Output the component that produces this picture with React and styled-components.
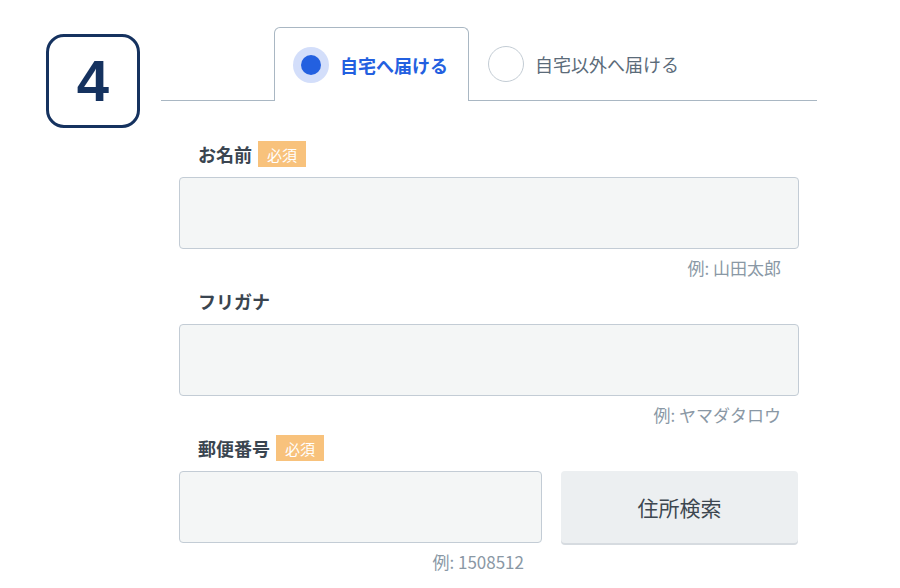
import React, { useState } from "react";
import styled, { createGlobalStyle, css } from "styled-components";

const GlobalStyle = createGlobalStyle`
  body {
    margin: 0;
    background: #ffffff;
    font-family: "Noto Sans CJK JP", "Noto Sans", sans-serif;
  }
`;

const Page = styled.div`
  display: flex;
  align-items: flex-start;
  width: 900px;
  height: 588px;
  padding-top: 27px;
  box-sizing: border-box;
  overflow: hidden;
`;

const StepBadge = styled.div`
  display: flex;
  justify-content: center;
  align-items: center;
  flex-shrink: 0;
  width: 94px;
  height: 94px;
  margin: 7px 21px 0 46px;
  box-sizing: border-box;
  border: 3px solid #15325f;
  border-radius: 18px;
  color: #15325f;
  font-family: "Liberation Sans", Arial, sans-serif;
  font-weight: 700;
  font-size: 58px;
  line-height: 1;
`;

const Content = styled.div`
  display: flex;
  flex-direction: column;
  width: 656px;
`;

const TabStrip = styled.div`
  display: flex;
  padding-left: 113px;
  border-bottom: 1px solid #a9b7c3;
`;

const Tab = styled.div`
  display: flex;
  align-items: center;
  gap: 11px;
  height: 73px;
  padding: 0 20px 0 18px;
  box-sizing: border-box;
  margin-bottom: -1px;
  border: 1px solid transparent;
  border-bottom: none;
  border-radius: 6px 6px 0 0;
  font-size: 18px;
  color: #5b6b79;
  cursor: pointer;

  ${(props) =>
    props.active &&
    css`
      height: 74px;
      border-color: #a9b7c3;
      background: #ffffff;
      color: #2360e0;
      font-weight: 700;
    `}
`;

const Radio = styled.span`
  display: flex;
  justify-content: center;
  align-items: center;
  width: 36px;
  height: 36px;
  box-sizing: border-box;
  border-radius: 50%;
  border: 1.5px solid #c3ccd4;

  ${(props) =>
    props.checked &&
    css`
      border: none;
      background: #d3defa;
      &::after {
        content: "";
        width: 20px;
        height: 20px;
        border-radius: 50%;
        background: #2360e0;
      }
    `}
`;

const Form = styled.div`
  display: flex;
  flex-direction: column;
  gap: 10px;
  padding: 40px 18px 0;
`;

const Field = styled.div`
  display: flex;
  flex-direction: column;
`;

const LabelRow = styled.div`
  display: flex;
  align-items: center;
  gap: 6px;
  height: 26px;
  margin-bottom: 10px;
  padding-left: 19px;
`;

const Label = styled.span`
  font-size: 18px;
  font-weight: 700;
  color: #3a4550;
`;

const Required = styled.span`
  display: flex;
  align-items: center;
  height: 26px;
  padding: 0 9px;
  background: #f8c27c;
  color: #ffffff;
  font-size: 15px;
`;

const InputRow = styled.div`
  display: flex;
  gap: 19px;
`;

const Column = styled.div`
  display: flex;
  flex-direction: column;
  width: ${(props) => props.width || "100%"};
`;

const Input = styled.input`
  width: 100%;
  height: 72px;
  box-sizing: border-box;
  padding: 0 16px;
  border: 1.5px solid #c3ccd5;
  border-radius: 4px;
  background: #f4f6f6;
  font-family: inherit;
  font-size: 18px;
  color: #36414a;
  outline: none;
`;

const Hint = styled.div`
  margin-top: 9px;
  padding-right: 18px;
  line-height: 20px;
  text-align: right;
  font-size: 17px;
  color: #8a98a5;
`;

const SearchButton = styled.button`
  width: 237px;
  height: 72px;
  border: none;
  border-radius: 4px;
  background: #eceff1;
  box-shadow: 0 2px 0 #d6dbe0;
  font-family: inherit;
  font-size: 21px;
  color: #3d4750;
  cursor: pointer;
`;

const App = () => {
  const [target, setTarget] = useState("home");

  return (
    <>
      <GlobalStyle />
      <Page>
        <StepBadge>4</StepBadge>
        <Content>
          <TabStrip>
            <Tab active={target === "home"} onClick={() => setTarget("home")}>
              <Radio checked={target === "home"} />
              自宅へ届ける
            </Tab>
            <Tab active={target === "other"} onClick={() => setTarget("other")}>
              <Radio checked={target === "other"} />
              自宅以外へ届ける
            </Tab>
          </TabStrip>
          <Form>
            <Field>
              <LabelRow>
                <Label>お名前</Label>
                <Required>必須</Required>
              </LabelRow>
              <Input />
              <Hint>例: 山田太郎</Hint>
            </Field>
            <Field>
              <LabelRow>
                <Label>フリガナ</Label>
              </LabelRow>
              <Input />
              <Hint>例: ヤマダタロウ</Hint>
            </Field>
            <Field>
              <LabelRow>
                <Label>郵便番号</Label>
                <Required>必須</Required>
              </LabelRow>
              <InputRow>
                <Column width="363px">
                  <Input />
                  <Hint>例: 1508512</Hint>
                </Column>
                <SearchButton>住所検索</SearchButton>
              </InputRow>
            </Field>
          </Form>
        </Content>
      </Page>
    </>
  );
};

export default App;
